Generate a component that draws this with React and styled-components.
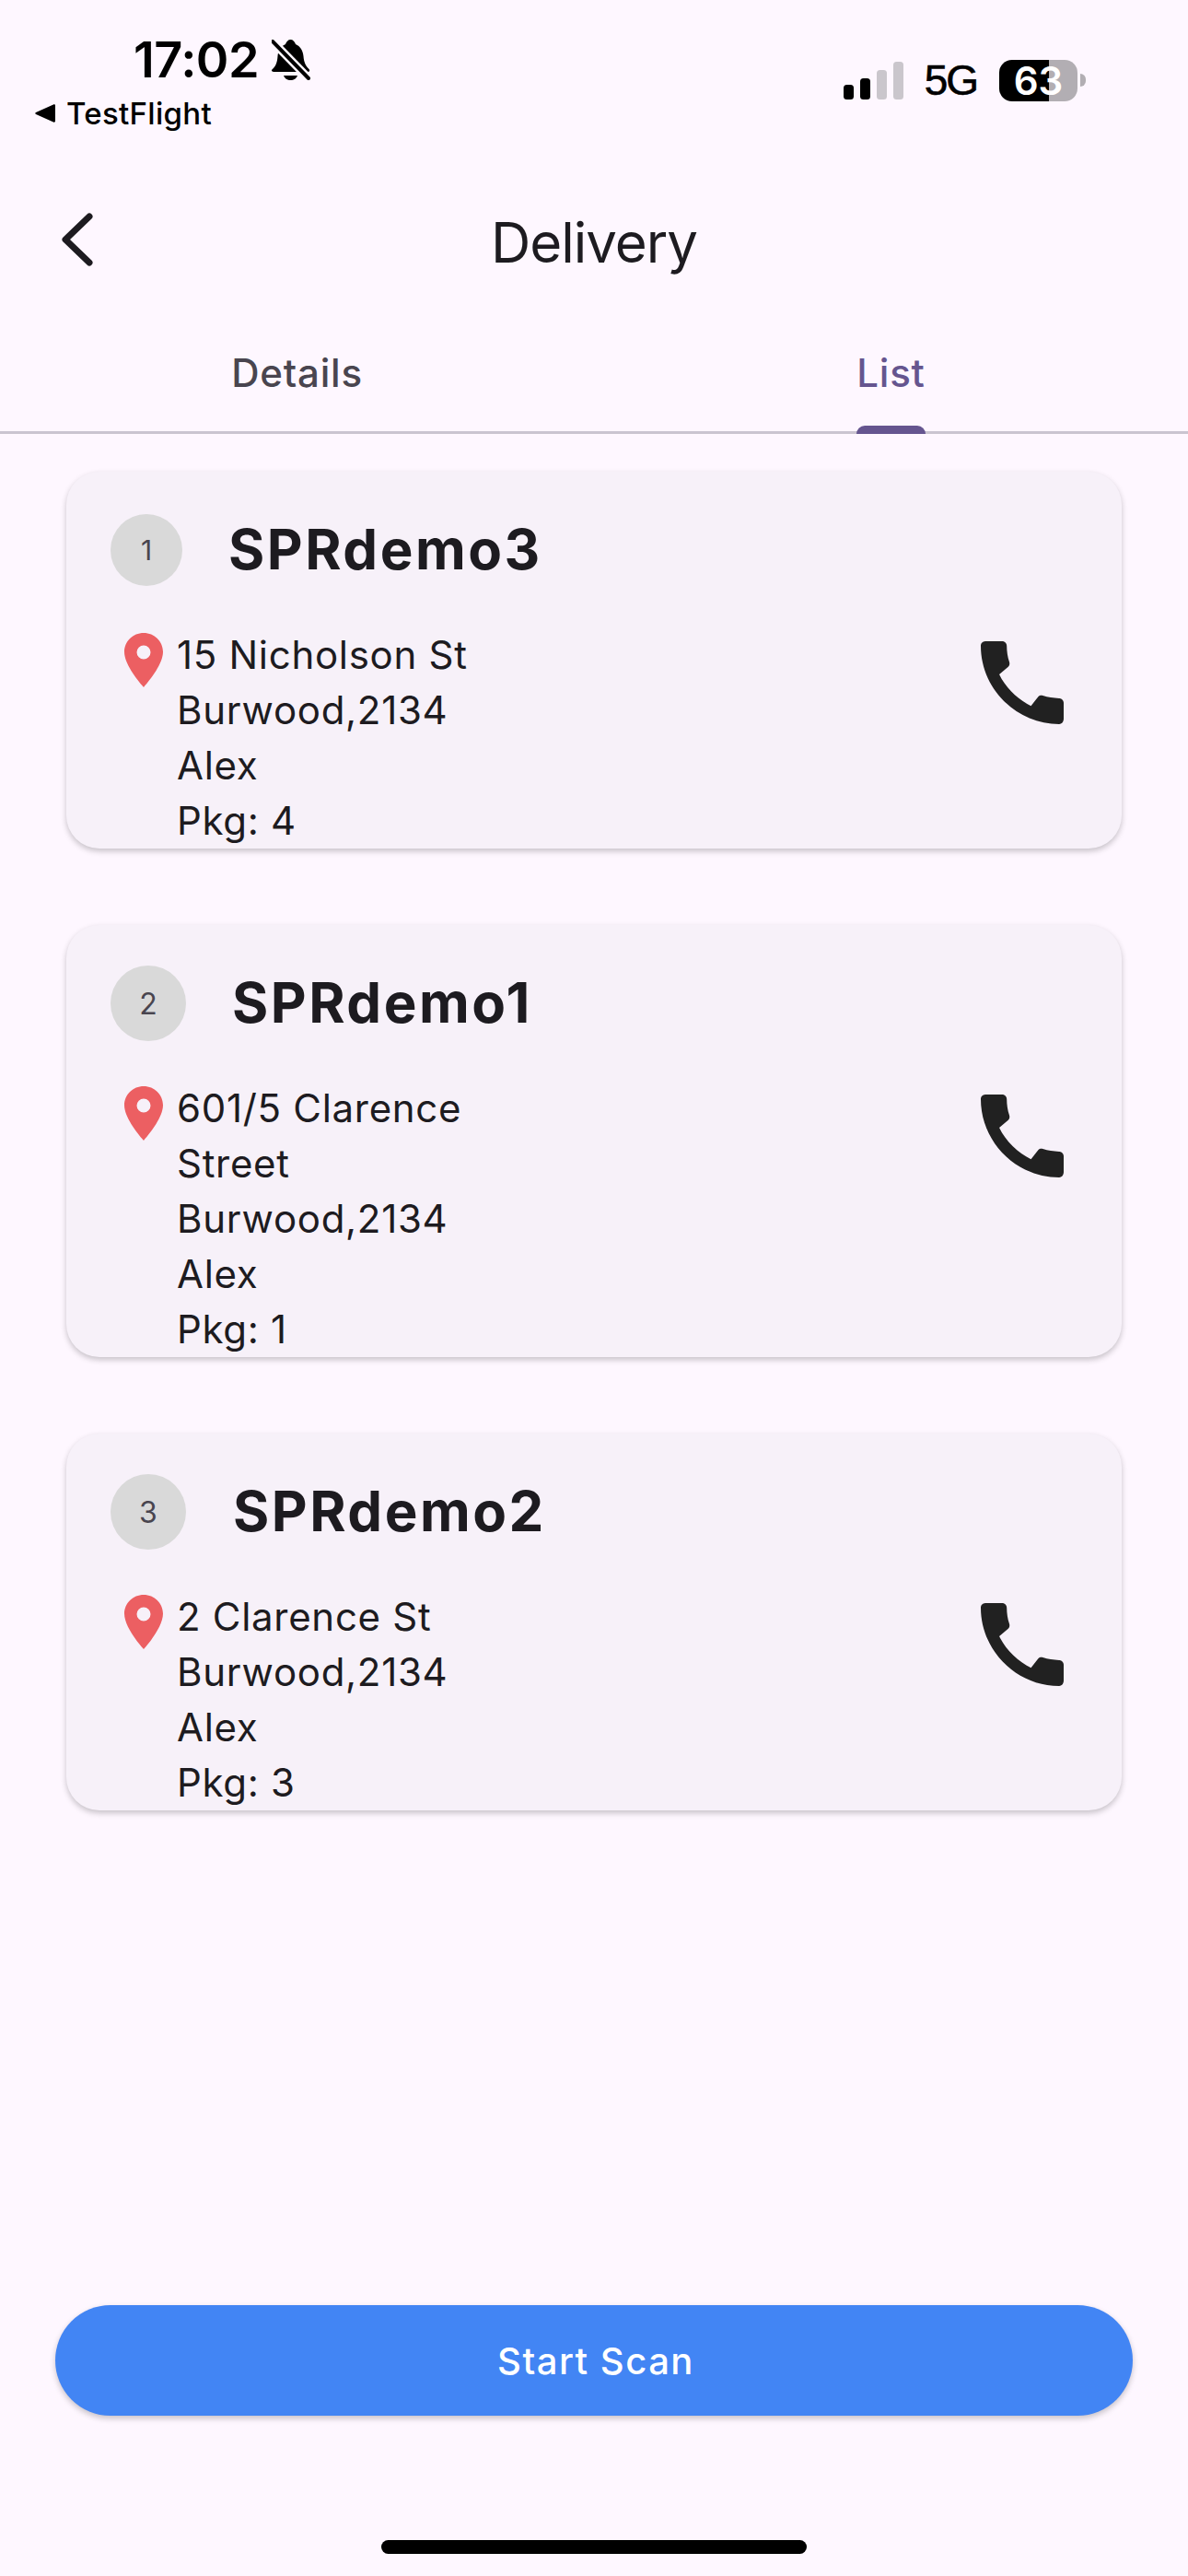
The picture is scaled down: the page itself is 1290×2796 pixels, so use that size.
import React from "react";
import styled, { createGlobalStyle } from "styled-components";

const Theme = {
  bg: "#FEF7FF",
  card: "#F7F1F9",
  ink: "#1D1B20",
  muted: "#49454F",
  purple: "#65558F",
  line: "#CAC4D0",
  blue: "#4285F4",
};

const GlobalStyle = createGlobalStyle`
  html, body {
    margin: 0;
    padding: 0;
    background: ${Theme.bg};
  }
  * { box-sizing: border-box; }
`;

const Page = styled.div`
  width: 1290px;
  height: 2796px;
  display: flex;
  flex-direction: column;
  background: ${Theme.bg};
  font-family: Inter, "Liberation Sans", sans-serif;
  color: ${Theme.ink};
  overflow: hidden;
`;

const StatusBar = styled.div`
  height: 208px;
  padding: 33px 111px 0 38px;
  display: flex;
  justify-content: space-between;
  align-items: flex-start;
  color: #000;
`;

const StatusLeft = styled.div`
  display: flex;
  flex-direction: column;
`;

const TimeRow = styled.div`
  display: flex;
  align-items: center;
  gap: 14px;
  margin-left: 107px;
  height: 64px;
`;

const Time = styled.span`
  font-size: 54px;
  font-weight: 600;
  line-height: 64px;
  letter-spacing: -0.5px;
`;

const BackApp = styled.div`
  display: flex;
  align-items: center;
  gap: 12px;
  height: 40px;
  margin-top: 6px;
  font-size: 33px;
  font-weight: 500;
  letter-spacing: 0.3px;
`;

const StatusRight = styled.div`
  display: flex;
  align-items: center;
  margin-top: 31px;
`;

const Signal = styled.svg`
  display: block;
  margin-right: 23px;
`;

const Network = styled.span`
  font-family: "Liberation Sans", sans-serif;
  font-size: 46px;
  line-height: 46px;
  letter-spacing: -2px;
  margin-right: 24px;
  -webkit-text-stroke: 0.6px #000;
`;

const Battery = styled.div`
  width: 85px;
  height: 45px;
  border-radius: 14px;
  display: flex;
  align-items: center;
  justify-content: center;
  color: #fff;
  font-size: 42px;
  font-weight: 600;
  background: linear-gradient(90deg, #000 0 54px, #b2aeb3 54px);
`;

const BatteryCap = styled.div`
  width: 6px;
  height: 14px;
  margin-left: 3px;
  border-radius: 0 6px 6px 0;
  background: #b2aeb3;
`;

const Header = styled.div`
  height: 110px;
  display: flex;
  align-items: center;
  justify-content: center;
  position: relative;
`;

const BackIcon = styled.svg`
  position: absolute;
  left: 64px;
  top: 20px;
`;

const Title = styled.h1`
  margin: 0;
  font-size: 60px;
  font-weight: 400;
  line-height: 72px;
  letter-spacing: -1px;
`;

const Tabs = styled.div`
  height: 153px;
  display: grid;
  grid-template-columns: 1fr 1fr;
  border-bottom: 3px solid ${Theme.line};
`;

const Tab = styled.div`
  display: flex;
  justify-content: center;
  padding-top: 62px;
  font-size: 42px;
  line-height: 50px;
  font-weight: 500;
  letter-spacing: 0.8px;
  color: ${(p) => (p.$active ? Theme.purple : Theme.muted)};
`;

const TabLabel = styled.span`
  position: relative;
  height: 88px;
`;

const Indicator = styled.span`
  position: absolute;
  left: 0;
  right: 0;
  bottom: -3px;
  height: 9px;
  border-radius: 9px 9px 0 0;
  background: ${Theme.purple};
`;

const List = styled.div`
  flex: 1;
  padding: 41px 72px 0;
  display: flex;
  flex-direction: column;
  gap: 83px;
`;

const Card = styled.div`
  background: ${Theme.card};
  border-radius: 36px;
  padding: 45px 48px 0;
  box-shadow: 0 3px 6px rgba(0, 0, 0, 0.22);
  overflow: hidden;
`;

const CardHead = styled.div`
  display: flex;
  align-items: center;
  gap: ${(p) => p.$gap}px;
  height: 80px;
  margin-bottom: 44px;
`;

const Badge = styled.div`
  width: ${(p) => p.$size}px;
  height: ${(p) => p.$size}px;
  flex-shrink: 0;
  border-radius: 50%;
  background: #d9d9d9;
  color: ${Theme.muted};
  font-size: ${(p) => p.$font}px;
  display: flex;
  align-items: center;
  justify-content: center;
`;

const Name = styled.div`
  font-size: 60px;
  font-weight: 700;
  letter-spacing: 2.5px;
  padding-bottom: 3px;
`;

const CardBody = styled.div`
  display: flex;
  justify-content: space-between;
  align-items: flex-start;
`;

const Address = styled.div`
  display: flex;
  align-items: flex-start;
`;

const Pin = styled.svg`
  display: block;
  margin: 6px 15px 0 15px;
  flex-shrink: 0;
`;

const Lines = styled.div`
  width: 400px;
  font-size: 42px;
  font-weight: 400;
  line-height: 60px;
  letter-spacing: 0.7px;
`;

const PhoneIcon = styled.svg`
  display: block;
  width: 120px;
  height: 120px;
  flex-shrink: 0;
  fill: #212121;
`;

const Footer = styled.div`
  padding: 0 60px;
  display: flex;
  flex-direction: column;
  align-items: center;
`;

const ScanButton = styled.button`
  width: 100%;
  height: 120px;
  border: none;
  border-radius: 60px;
  background: ${Theme.blue};
  color: #fff;
  font-family: inherit;
  font-size: 40px;
  font-weight: 500;
  letter-spacing: 1.5px;
  padding: 0 0 0 4px;
  box-shadow: 0 3px 6px rgba(0, 0, 0, 0.22);
`;

const HomeBar = styled.div`
  width: 462px;
  height: 15px;
  margin: 135px 0 24px;
  border-radius: 8px;
  background: #000;
`;

const stops = [
  { num: 1, name: "SPRdemo3", size: 78, font: 30, gap: 50, lines: ["15 Nicholson St", "Burwood,2134", "Alex", "Pkg: 4"] },
  { num: 2, name: "SPRdemo1", size: 82, font: 32, gap: 50, lines: ["601/5 Clarence", "Street", "Burwood,2134", "Alex", "Pkg: 1"] },
  { num: 3, name: "SPRdemo2", size: 82, font: 32, gap: 51, lines: ["2 Clarence St", "Burwood,2134", "Alex", "Pkg: 3"] },
];

const StopCard = ({ stop }) => (
  <Card>
    <CardHead $gap={stop.gap}>
      <Badge $size={stop.size} $font={stop.font}>{stop.num}</Badge>
      <Name>{stop.name}</Name>
    </CardHead>
    <CardBody>
      <Address>
        <Pin width="42" height="59" viewBox="0 0 42 59">
          <path
            fillRule="evenodd"
            fill="#EC5F62"
            d="M21 0C9.400 0 0 9.200 0 20.600 0 33 13 50 21 59c8-9 21-26 21-38.400C42 9.200 32.600 0 21 0zm0 13.500a7.500 7.500 0 1 1 0 15 7.500 7.500 0 0 1 0-15z"
          />
        </Pin>
        <Lines>
          {stop.lines.map((l) => (
            <div key={l}>{l}</div>
          ))}
        </Lines>
      </Address>
      <PhoneIcon viewBox="0 0 24 24">
        <path d="M20.010 15.380c-1.230 0-2.420-.2-3.530-.56-.35-.12-.74-.03-1.010.24l-1.570 1.970c-2.830-1.350-5.480-3.900-6.890-6.830l1.950-1.660c.27-.28.35-.67.24-1.020-.37-1.110-.56-2.300-.56-3.530 0-.54-.45-.99-.99-.99H4.190C3.650 3 3 3.240 3 3.990 3 13.280 10.730 21 20.010 21c.71 0 .99-.63.99-1.180v-3.450c0-.54-.45-.99-.99-.99z" />
      </PhoneIcon>
    </CardBody>
  </Card>
);

const App = () => {
  return (
    <Page>
      <GlobalStyle />
      <StatusBar>
        <StatusLeft>
          <TimeRow>
            <Time>17:02</Time>
            <svg width="42" height="44" viewBox="0 0 42 44">
              <path d="M20.500 0c2.500 0 4.500 2 5.500 5 5 2 8 7 8.500 13 .5 6 2 10 6 14 1 1 1 3-1 3H2c-2 0-3-2-1-3 4-4 5-8 5.500-14 .5-6 3.500-11 8.500-13 1-3 3-5 5.500-5z" fill="#000" />
              <path d="M13 39h15c-1 3-4 5-7.500 5S14 42 13 39z" fill="#000" />
              <path d="M1 2 L40 42" stroke="#FEF7FF" strokeWidth="9" />
              <path d="M1 2 L40 42" stroke="#000" strokeWidth="4" strokeLinecap="round" />
            </svg>
          </TimeRow>
          <BackApp>
            <svg width="22" height="20" viewBox="0 0 22 20">
              <path d="M22 1.500v17c0 1-1 1.500-2 1L1 11c-1-.6-1-1.400 0-2L20 .5c1-.5 2 0 2 1z" fill="#000" />
            </svg>
            TestFlight
          </BackApp>
        </StatusLeft>
        <StatusRight>
          <Signal width="65" height="41" viewBox="0 0 65 41">
            <rect x="0" y="25" width="11" height="16" rx="3.500" fill="#000" />
            <rect x="18" y="18" width="11" height="23" rx="3.500" fill="#000" />
            <rect x="36" y="9" width="11" height="32" rx="3.500" fill="#CAC6CC" />
            <rect x="54" y="0" width="11" height="41" rx="3.500" fill="#CAC6CC" />
          </Signal>
          <Network>5G</Network>
          <Battery>63</Battery>
          <BatteryCap />
        </StatusRight>
      </StatusBar>
      <Header>
        <BackIcon width="40" height="64" viewBox="0 0 40 64">
          <path d="M33 7 L7 32 L33 57" fill="none" stroke="#1D1B20" strokeWidth="7" strokeLinecap="round" strokeLinejoin="round" />
        </BackIcon>
        <Title>Delivery</Title>
      </Header>
      <Tabs>
        <Tab>
          <TabLabel>Details</TabLabel>
        </Tab>
        <Tab $active>
          <TabLabel>
            List
            <Indicator />
          </TabLabel>
        </Tab>
      </Tabs>
      <List>
        {stops.map((s) => (
          <StopCard key={s.num} stop={s} />
        ))}
      </List>
      <Footer>
        <ScanButton>Start Scan</ScanButton>
        <HomeBar />
      </Footer>
    </Page>
  );
};

export default App;
